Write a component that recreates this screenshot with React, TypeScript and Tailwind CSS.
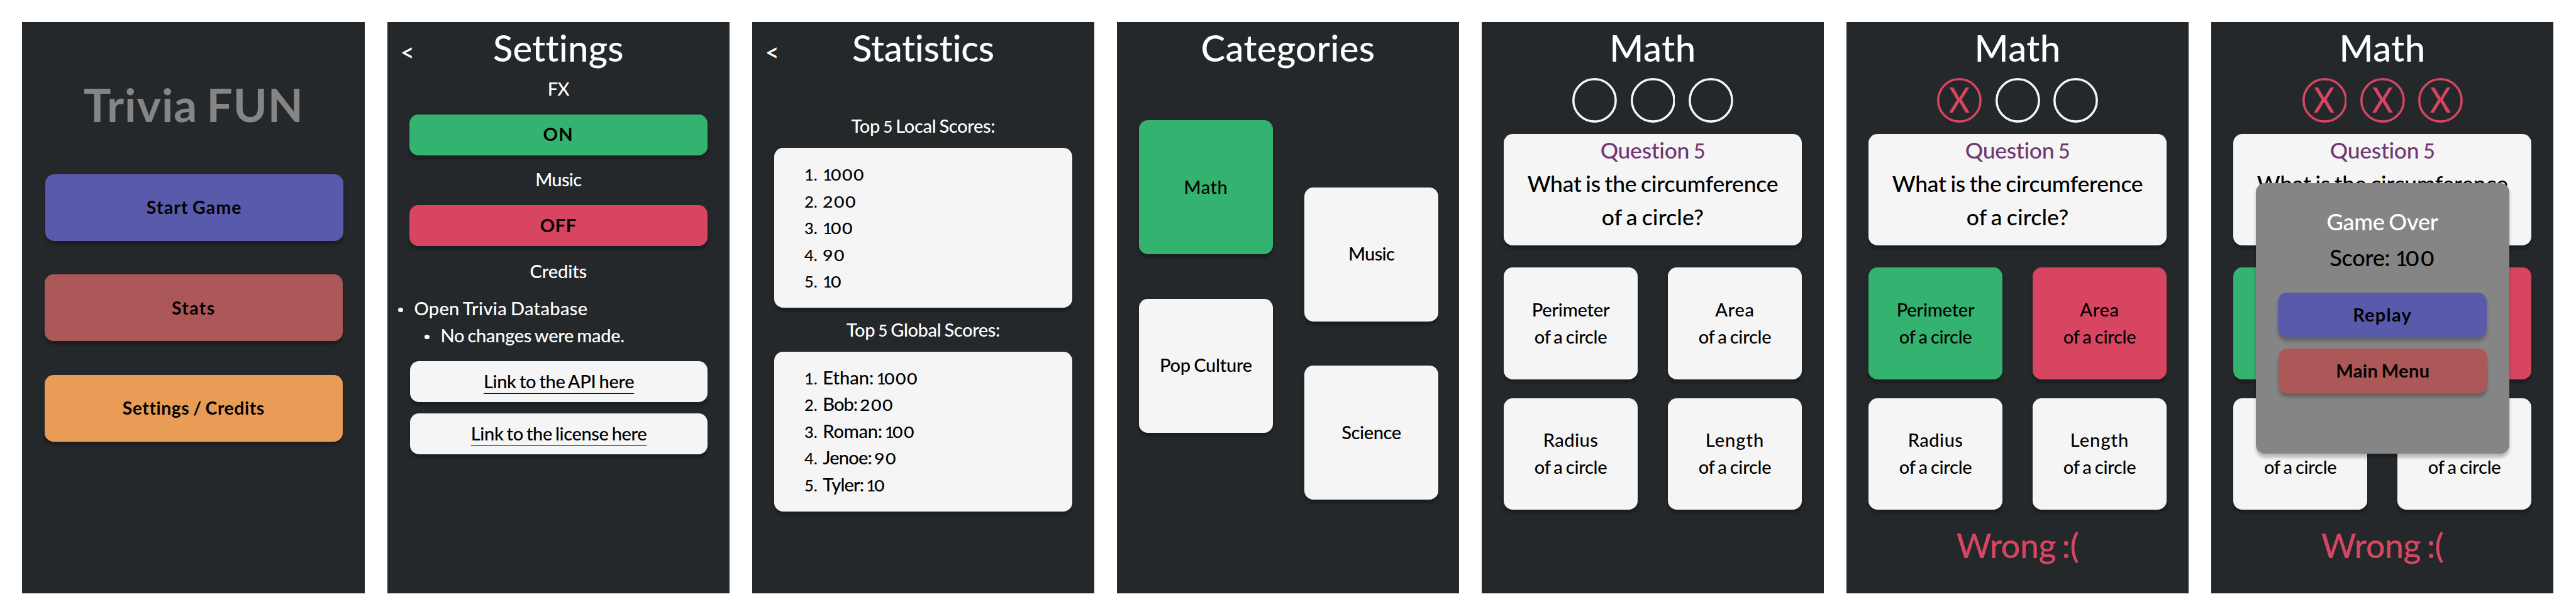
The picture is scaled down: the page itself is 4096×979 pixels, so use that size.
import type { ReactNode } from "react";
import { clsx } from "clsx";

const SHADOW = "shadow-[0_5.7px_5.7px_rgba(0,0,0,0.25)]";
const BODY = "text-[29.1px] leading-60 font-medium [word-spacing:-0.06em]";

const tones = {
  light: "bg-[#f5f5f5]",
  green: "bg-[#34b26f]",
  red: "bg-[#d74561]",
  blue: "bg-[#5a5aad]",
  brick: "bg-[#ad5858]",
  orange: "bg-[#e99c56]",
};
type Tone = keyof typeof tones;

function Screen({ children }: { children: ReactNode }) {
  return (
    <section className="relative flex h-1280 w-768 shrink-0 flex-col bg-[#24282b] text-white">
      {children}
    </section>
  );
}

function Title({ children, back, className }: { children: ReactNode; back?: boolean; className?: string }) {
  return (
    <header
      className={clsx(
        "relative h-114 shrink-0 text-center text-[58.1px] leading-117 font-medium",
        className,
      )}
    >
      {back && (
        <span className="absolute top-9 left-30 text-[38px] leading-114 font-semibold">&lt;</span>
      )}
      {children}
    </header>
  );
}

function Card({ tone = "light", className, children }: { tone?: Tone; className?: string; children?: ReactNode }) {
  return (
    <div className={clsx("shrink-0 rounded-[14.2px] text-black", tones[tone], SHADOW, className)}>
      {children}
    </div>
  );
}

function Button({ tone, className, children }: { tone: Tone; className?: string; children: ReactNode }) {
  return (
    <Card
      tone={tone}
      className={clsx("flex items-center justify-center pb-1 font-bold [word-spacing:-0.06em]", className)}
    >
      {children}
    </Card>
  );
}

/** Numerals sit lower than capitals, with a narrow "1" and wide round figures. */
function Digits({ value, className }: { value: string; className?: string }) {
  return (
    <span className={clsx("leading-0", className ?? "text-[25.5px]")}>
      {value.split("").map((d, i) => (
        <span
          key={i}
          className={
            d === "1"
              ? "tracking-[-0.09em]"
              : "inline-block origin-left scale-x-[1.12] tracking-[0.12em]"
          }
        >
          {d}
        </span>
      ))}
    </span>
  );
}

function ScoreList({ rows }: { rows: { name?: string; score: string; track?: string }[] }) {
  return (
    <Card className="mx-50 mt-19 h-358 pt-28">
      <ol className={BODY}>
        {rows.map((row, i) => (
          <li key={i} className="flex h-60">
            <span className="w-97 text-right">
              <span className="text-[25.5px] leading-0">{i + 1}.</span>
            </span>
            <span className="ml-12">
              {row.name && <span className={clsx("mr-6", row.track)}>{row.name}:</span>}
              <Digits value={row.score} />
            </span>
          </li>
        ))}
      </ol>
    </Card>
  );
}

function Life({ lost }: { lost: boolean }) {
  return (
    <div
      className={clsx(
        "relative flex h-100 w-100 items-center justify-center pb-5",
        lost ? "text-[#d74561]" : "text-[#f5f5f5]",
      )}
    >
      <svg viewBox="0 0 100 100" className="absolute inset-0 h-full w-full" fill="none">
        <circle cx="50" cy="50" r="47.5" stroke="currentColor" strokeWidth="5" />
      </svg>
      {lost && <span className="scale-x-[0.9] text-[56.7px] leading-100 font-medium">X</span>}
    </div>
  );
}

function Answer({ word, track, tone }: { word: string; track: string; tone?: Tone }) {
  return (
    <Card
      tone={tone}
      className={clsx("flex h-250 w-300 flex-col items-center justify-center pb-1", BODY)}
    >
      <span className={track}>{word}</span>
      <span className="tracking-[-0.011em]">of a circle</span>
    </Card>
  );
}

function Quiz({ lost, revealed, children }: { lost: number; revealed?: boolean; children?: ReactNode }) {
  return (
    <Screen>
      <Title className="tracking-[0.008em]">Math</Title>
      <div className="mt-11 flex justify-center gap-30">
        {[0, 1, 2].map((i) => (
          <Life key={i} lost={i < lost} />
        ))}
      </div>
      <Card className="mx-50 mt-25 h-250 text-center text-[35.5px] font-medium [word-spacing:-0.06em]">
        <p className="h-70 leading-72 tracking-[-0.008em] text-[#6f3872]">
          Question <span className="text-[32.6px] leading-0">5</span>
        </p>
        <p className="mt-3.5 leading-75 tracking-[-0.006em]">What is the circumference</p>
        <p className="leading-75 tracking-[0.005em]">of a circle?</p>
      </Card>
      <div className="mx-50 mt-50 grid grid-cols-2 gap-x-68 gap-y-42">
        <Answer word="Perimeter" track="tracking-[-0.008em]" tone={revealed ? "green" : "light"} />
        <Answer word="Area" track="tracking-[0.024em]" tone={revealed ? "red" : "light"} />
        <Answer word="Radius" track="tracking-[0.016em]" />
        <Answer word="Length" track="tracking-[0.034em]" />
      </div>
      {revealed && (
        <p className="mt-30 h-100 text-center text-[53.9px] leading-100 font-medium tracking-[-0.012em] text-[#d74561] [word-spacing:-0.06em]">
          Wrong :(
        </p>
      )}
      {children}
    </Screen>
  );
}

function Bullet({ className, children }: { className: string; children: ReactNode }) {
  return (
    <li className={clsx("flex h-60 items-center gap-25", className)}>
      <span className="mt-6 h-10.5 w-10.5 shrink-0 rounded-full bg-white" />
      <span>{children}</span>
    </li>
  );
}

function LinkCard({ className, track, children }: { className: string; track: string; children: ReactNode }) {
  return (
    <Card className={clsx("mr-49 ml-51 flex h-92 items-center justify-center", className)}>
      <a
        className={clsx(
          "underline decoration-[1.4px] underline-offset-[8px] [text-decoration-skip-ink:none]",
          track,
        )}
      >
        {children}
      </a>
    </Card>
  );
}

export default function App() {
  return (
    <main className="flex h-1380 w-5776 gap-50 overflow-hidden bg-white p-50 font-['Lato',sans-serif] [--spacing:0.70914px]">
      <Screen>
        <h1 className="mt-125 h-120 text-center text-[73px] leading-120 font-bold tracking-[0.012em] text-[#858585] [word-spacing:-0.06em]">
          Trivia FUN
        </h1>
        <div className="mt-95 flex flex-col gap-75 px-50 text-[28.4px]">
          <Button tone="blue" className="h-150 translate-x-px tracking-[0.041em]">Start Game</Button>
          <Button tone="brick" className="h-150 tracking-[0.049em]">Stats</Button>
          <Button tone="orange" className="h-150 tracking-[0.019em]">Settings / Credits</Button>
        </div>
      </Screen>

      <Screen>
        <Title back className="tracking-[0.003em]">Settings</Title>
        <div className={clsx("flex flex-col text-center", BODY)}>
          <p className="mt-5 tracking-[-0.02em]">FX</p>
          <Button tone="green" className="mx-50 mt-27 h-92 tracking-[0.05em]">ON</Button>
          <p className="mt-25 tracking-[-0.025em]">Music</p>
          <Button tone="red" className="mx-50 mt-27 h-92 tracking-[0.02em]">OFF</Button>
          <p className="mt-26 tracking-[-0.004em]">Credits</p>
          <ul className="mt-24 text-left">
            <Bullet className="pl-25 tracking-[0.01em]">Open Trivia Database</Bullet>
            <Bullet className="pl-84.5 tracking-[-0.012em]">No changes were made.</Bullet>
          </ul>
          <LinkCard className="mt-27" track="tracking-[-0.013em]">Link to the API here</LinkCard>
          <LinkCard className="mt-25" track="tracking-[-0.0145em]">Link to the license here</LinkCard>
        </div>
      </Screen>

      <Screen>
        <Title back className="tracking-[-0.005em]">Statistics</Title>
        <h2 className={clsx("mt-89 text-center tracking-[-0.013em]", BODY)}>
          Top <span className="text-[26px] leading-0">5</span> Local Scores:
        </h2>
        <ScoreList
          rows={[{ score: "1000" }, { score: "200" }, { score: "100" }, { score: "90" }, { score: "10" }]}
        />
        <h2 className={clsx("mt-19 text-center tracking-[-0.014em]", BODY)}>
          Top <span className="text-[26px] leading-0">5</span> Global Scores:
        </h2>
        <ScoreList
          rows={[
            { name: "Ethan", score: "1000" },
            { name: "Bob", score: "200", track: "tracking-[-0.035em]" },
            { name: "Roman", score: "100", track: "tracking-[-0.01em]" },
            { name: "Jenoe", score: "90", track: "tracking-[-0.03em]" },
            { name: "Tyler", score: "10", track: "tracking-[-0.03em]" },
          ]}
        />
      </Screen>

      <Screen>
        <Title className="tracking-[0.006em]">Categories</Title>
        <div className={clsx("mx-50 mt-106 flex justify-between", BODY)}>
          <div className="flex flex-col gap-100">
            <Card tone="green" className="flex h-300 w-300 items-center justify-center pb-2 tracking-[0.016em]">
              Math
            </Card>
            <Card className="flex h-300 w-300 items-center justify-center pb-2 tracking-[-0.01em]">
              Pop Culture
            </Card>
          </div>
          <div className="-mr-3 mt-150 flex flex-col gap-100">
            <Card className="flex h-300 w-300 items-center justify-center pb-2 tracking-[-0.025em]">
              Music
            </Card>
            <Card className="flex h-300 w-300 items-center justify-center pb-2 tracking-[-0.0145em]">
              Science
            </Card>
          </div>
        </div>
      </Screen>

      <Quiz lost={0} />
      <Quiz lost={1} revealed />
      <Quiz lost={3} revealed>
        <div
          role="dialog"
          className={clsx(
            "absolute top-361 left-100 flex h-606 w-568 flex-col rounded-[14.2px] bg-[#858585] pt-46 text-center font-medium",
            SHADOW,
          )}
        >
          <p className="h-80 text-[36.2px] leading-80 tracking-[-0.009em] [word-spacing:-0.06em]">Game Over</p>
          <p className="h-80 text-[36.2px] leading-80 tracking-[-0.01em] text-black">
            Score: <Digits value="100" className="text-[33.3px]" />
          </p>
          <Button tone="blue" className="mx-50 mt-39 h-100 text-[29.1px] tracking-[0.041em]">Replay</Button>
          <Button tone="brick" className="mr-49 ml-51 mt-25 h-100 text-[29.1px] tracking-[0.01em]">Main Menu</Button>
        </div>
      </Quiz>
    </main>
  );
}
